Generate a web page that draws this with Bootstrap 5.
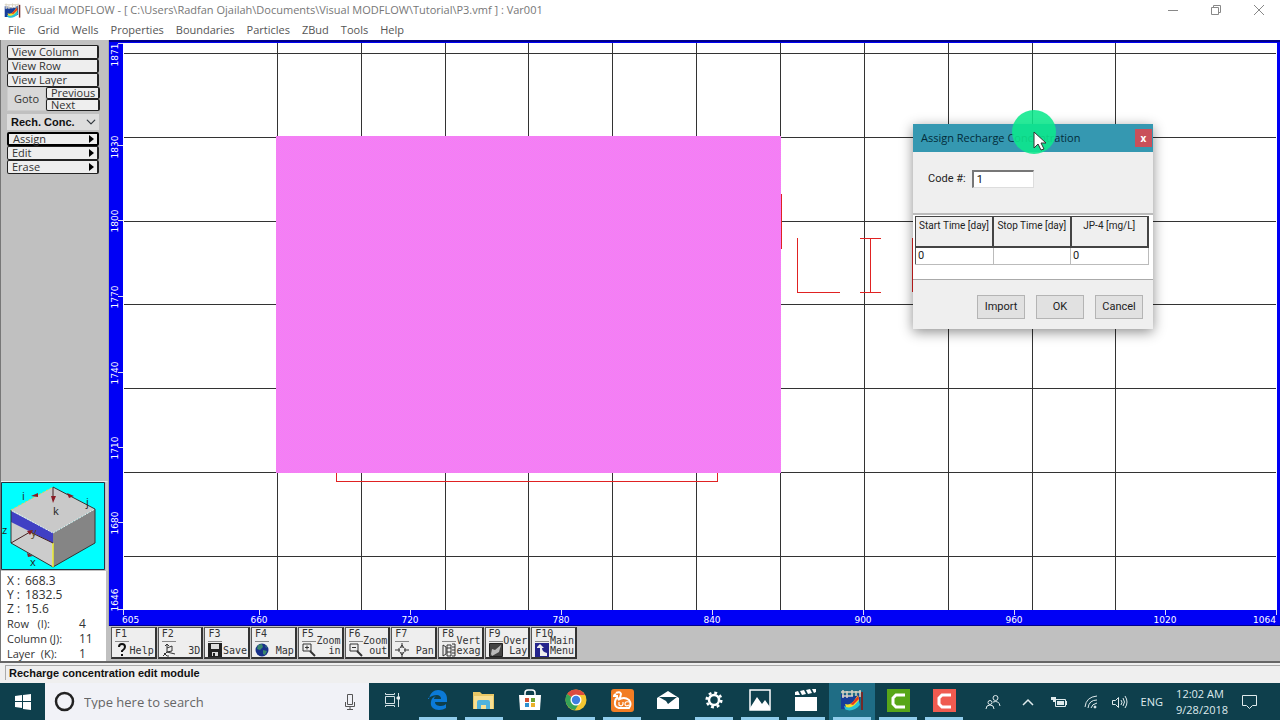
<!DOCTYPE html>
<html lang="en">
<head>
<meta charset="utf-8">
<meta name="viewport" content="width=device-width, initial-scale=1">
<title>Visual MODFLOW</title>
<link href="https://cdn.jsdelivr.net/npm/bootstrap@5.3.0/dist/css/bootstrap.min.css" rel="stylesheet">
<style>
body{font-family:"Open Sans","Noto Sans",sans-serif;font-size:11px;line-height:14px;color:#333;background:#fff}
button{font:inherit;color:inherit}
svg{display:block}
.titlebar{height:20px;line-height:20px;color:#777}
.win-ctl{width:43px;height:20px;border:0;background:none;padding:0;color:#888}
.menubar{height:20px}
.menubar .nav-link{color:#555;padding:0;line-height:20px}
.menubar .nav{gap:12px;padding-left:8px}
.side{width:108px;background:#c0c0c0;border-left:1px solid #777}
.side-tools{padding:5px 9px 0 6px}
.side-btn{display:flex;align-items:center;justify-content:space-between;width:100%;height:14px;line-height:12px;padding:0 3px 0 4px;border:1px solid #222;border-right-width:2px;border-radius:2px;background:#eee;text-align:left}
.side-btn.current{border-color:#000;border-width:2px;line-height:10px}
.jump .side-btn{height:12px;line-height:10px}
.goto{width:39px;background:#d8d8d8;border:1px solid #ccc;padding:0}
.side .form-select{font:bold 11px/16px "Liberation Sans",sans-serif;color:#111;padding:0 16px 0 4px;margin:3px 0 2px;height:16px;border:0;border-radius:0;background-color:#ddd;background-position:right 3px center;background-size:10px 10px}
.cube{border-top:1px solid #eee;border-right:2px solid #ccc}
.coords{background:#fff;padding:3px 0 0 6px;margin-right:2px;font-size:12px}
.coords dl{display:grid;grid-template-columns:18px 1fr;margin:0}
.coords dl.cells{grid-template-columns:72px 1fr}
.coords dt{font-weight:400;white-space:nowrap}
.coords dd{margin:0}
.coords .cells dt,.coords .cells dd{line-height:15px}
.coords .cells dt{font-size:11px}
.plot svg text{font-family:"DejaVu Sans",sans-serif;font-size:9px;fill:#fff}
.fkeys{height:35px;background:#c0c0c0;padding:1px 0 2px 3px}
.fkeys-row{display:grid;grid-template-columns:repeat(10,1fr);gap:1px;width:466px;height:32px}
.fkey{display:grid;grid-template-columns:auto 1fr;grid-template-rows:11px 17px;padding:1px 1px 0 3px;border:1px solid #555;border-right:2px solid #333;border-bottom:2px solid #333;background:#eee;font:10px/10px "DejaVu Sans Mono",monospace;text-align:right;color:#333}
.fkey .key{grid-row:1;grid-column:1/3;text-align:left}
.fkey svg{grid-row:2;grid-column:1;align-self:center;border-top:1px solid #888}
.fkey .cap{grid-row:2;grid-column:2;align-self:end;padding-bottom:1px}
.fkey.two .cap{grid-row:1/3;align-self:end}
.statusbar{height:22px;background:#efefef;border-top:2px solid #666;padding:2px 0 0 5px}
.status-text{border-top:1px solid #aaa;border-left:1px solid #aaa;padding-left:3px;font:bold 11px/14px "Liberation Sans",sans-serif;color:#111}
.dlg{position:absolute;top:84px;right:127px;width:240px;background:#efefef;box-shadow:0 3px 12px rgba(0,0,0,.45);font:11px/14px "Roboto",sans-serif;color:#222}
.dlg-head{height:28px;background:#3598b1;padding:0 1px 0 8px;font:11px/28px "Open Sans",sans-serif;color:#022c3a}
.dlg-x{width:17px;height:18px;border:0;background:#c9505a;color:#fff;padding:0;font-weight:700;font-size:10px;line-height:14px}
.code-row{padding:18px 0 25px 15px;gap:6px}
.code-row input{width:62px;height:18px;padding:0 3px;border:1px solid #ddd;border-top:2px solid #777;border-left:2px solid #777;background:#fff;font:inherit;color:#111}
.sheet{border-top:2px solid #bbb;border-bottom:1px solid #aaa;background:#fff;padding:1px 4px 14px 2px}
.sheet table{width:100%;table-layout:fixed;border-collapse:collapse;border-left:1px solid #555}
.sheet th{font-weight:400;font-size:10px;height:30px;vertical-align:top;text-align:center;background:#efefef;border:2px solid #444;border-top-width:1px;border-left-width:1px;padding:2px 0;white-space:nowrap}
.sheet td{height:18px;border-right:1px solid #bbb;border-bottom:1px solid #bbb;padding:1px 2px}
.dlg-foot{padding:15px 10px 10px;gap:11px}
.dlg-foot button{width:48px;height:24px;border:1px solid #b4b4b4;background:#e1e1e1;padding:0}
.pointer{position:absolute;left:99px;top:-14px}
.taskbar{height:37px;background:#0e3f4c;color:#e4eef0}
.start{width:45px;border:0;background:none;padding:0}
.search{flex:0 1 324px;background:#f1f2f7;padding:0 13px 0 9px;gap:9px}
.search input{min-width:0;border:0;background:none;outline:0;font-size:13px;color:#555;padding:0}
.search input::placeholder{color:#666;opacity:1}
.app{width:46px;border:0;border-bottom:3px solid transparent;background:none;padding:0;position:relative}
.app svg,.start svg,.win-ctl svg{margin:auto}
.app.open::after{content:"";position:absolute;left:4px;right:4px;bottom:-3px;height:3px;background:#91cdec}
.app.active{background:#1f6d85}
.tray{gap:13px;padding-right:22px;color:#dfeaec}
.clock{width:48px;line-height:16px;text-align:center;white-space:nowrap}
</style>
</head>
<body class="d-flex flex-column min-vh-100">

<svg width="0" height="0" class="position-absolute" aria-hidden="true">
  <symbol id="modflow" viewBox="0 0 24 22">
    <path d="M1 5v15h10l9-3V4l-5 3z" fill="#173d9a"/>
    <path d="M4 17c5 2 10-2 14-9l2 8c-4 5-11 7-15 4z" fill="#2bc2d4"/>
    <path d="M5 15c6 2 9-3 13-9l1 5c-3 4-7 9-13 7z" fill="#f4e22c"/><path d="M10 15c3-1 5-5 8-8l1 3-6 6z" fill="#e6361f"/>
    <path d="M1 3h20M2 7h11M3 1v8M7 2v7M12 1v6M16 2v5M20 1v7" stroke="#d9d3c4" stroke-width="1.500"/>
    <path d="M22 3v18" stroke="#732929" stroke-width="2"/>
  </symbol>
</svg>

<header>
  <div class="titlebar d-flex align-items-center">
    <svg width="17" height="17" class="ms-1 flex-shrink-0"><use href="#modflow"/></svg>
    <div class="flex-grow-1 text-nowrap ms-1">Visual MODFLOW - [ C:\Users\Radfan Ojailah\Documents\Visual MODFLOW\Tutorial\P3.vmf ] : Var001</div>
    <button class="win-ctl" aria-label="Minimize"><svg width="12" height="12" stroke="currentColor"><path d="M1 6.500h10"/></svg></button>
    <button class="win-ctl" aria-label="Restore"><svg width="12" height="12" fill="none" stroke="currentColor"><path d="M1.500 3.500h7v7h-7zM3.500 3.500v-2h7v7h-2"/></svg></button>
    <button class="win-ctl" aria-label="Close"><svg width="12" height="12" stroke="currentColor"><path d="M1 1l10 10M11 1L1 11"/></svg></button>
  </div>
  <nav class="menubar">
    <div class="nav flex-nowrap">
      <a class="nav-link" href="#">File</a><a class="nav-link" href="#">Grid</a><a class="nav-link" href="#">Wells</a><a class="nav-link" href="#">Properties</a><a class="nav-link" href="#">Boundaries</a><a class="nav-link" href="#">Particles</a><a class="nav-link" href="#">ZBud</a><a class="nav-link" href="#">Tools</a><a class="nav-link" href="#">Help</a>
    </div>
  </nav>
</header>

<main class="d-flex flex-grow-1">
  <aside class="side d-flex flex-column flex-shrink-0">
    <div class="side-tools">
      <button class="side-btn">View Column</button>
      <button class="side-btn">View Row</button>
      <button class="side-btn">View Layer</button>
      <div class="jump d-flex">
        <button class="goto flex-shrink-0">Goto</button>
        <div class="flex-grow-1"><button class="side-btn">Previous</button><button class="side-btn">Next</button></div>
      </div>
      <select class="form-select" aria-label="Module"><option>Rech. Conc.</option></select>
      <button class="side-btn current">Assign<svg width="5" height="8"><path d="M0 0l5 4-5 4z"/></svg></button>
      <button class="side-btn">Edit<svg width="5" height="8"><path d="M0 0l5 4-5 4z"/></svg></button>
      <button class="side-btn">Erase<svg width="5" height="8"><path d="M0 0l5 4-5 4z"/></svg></button>
    </div>
    <div class="cube mt-auto">
      <svg width="105" height="89" viewBox="0 0 105 89">
        <path d="M.5.500h103v87H.5z" fill="#0ff" stroke="#234"/>
        <path d="M10 28L52 5l42 22-42 24z" fill="#c9c9c9"/><path d="M94 27v34L52 85V51z" fill="#858585"/>
        <path d="M10 28l42 23v34L10 61z" fill="#ccc"/><path d="M10 29l42 22v10L10 40z" fill="#4040c4"/>
        <path d="M10 28l42 23 42-24" fill="none" stroke="#eee" stroke-dasharray="2 1"/>
        <path d="M52 5l42 22v34L52 85 10 61V28" fill="none" stroke="#333"/><path d="M10 28L52 5" stroke="#dddd44" stroke-dasharray="2 2"/><path d="M52 61v24" stroke="#ee3" stroke-width="1.500"/>
        <path d="M10 61l19-11 23 11M52 5v12" fill="none" stroke="#422"/>
        <path d="M50 14h5l-3 7zM30 14l7-3v4zM66 11l7 3-5 2zM26 49l6-1-3 5zM26 71l6 3-5 1z" fill="#8a1b24"/>
        <g font-size="11" fill="#222"><text x="21" y="18">i</text><text x="85" y="24">j</text><text x="52" y="33">k</text><text x="1" y="52">z</text><text x="30" y="54" fill="#542">y</text><text x="29" y="84">x</text></g>
      </svg>
    </div>
    <div class="coords">
      <dl><dt>X :</dt><dd>668.3</dd><dt>Y :</dt><dd>1832.5</dd><dt>Z :</dt><dd>15.6</dd></dl>
      <dl class="cells"><dt>Row &nbsp;&nbsp;(I):</dt><dd>4</dd><dt>Column (J):</dt><dd>11</dd><dt>Layer &nbsp;(K):</dt><dd>1</dd></dl>
    </div>
  </aside>

  <section class="d-flex flex-column flex-grow-1">
    <div class="plot position-relative">
      <svg class="w-100" viewBox="108 40 1172 586" role="img" aria-label="Model grid">
        <defs><pattern id="dither" width="2" height="2" patternUnits="userSpaceOnUse"><path d="M0 0h2v2H0z" fill="#ef8af0"/><path d="M0 0h1v1H0zM1 1h1v1H1z" fill="#f974f9"/></pattern></defs>
        <path d="M108 40h1172v586H108z" fill="#0000f5"/><path d="M108 40h1v586h-1z" fill="#aaa"/><path d="M109 40h1171v2H109zM109 625h1171v1H109z" fill="#00008c"/>
        <path d="M123 43h1154v567H123z" fill="#fff"/>
        <g fill="none" stroke="#333" shape-rendering="crispEdges">
          <path d="M277.500 43v567M361.500 43v567M445.500 43v567M528.500 43v567M612.500 43v567M696.500 43v567M780.500 43v567M864.500 43v567M948.500 43v567M1032.500 43v567M1115.500 43v567"/>
          <path d="M124 53.500h1152M124 137.500h1152M124 221.500h1152M124 304.500h1152M124 388.500h1152M124 472.500h1152M124 556.500h1152"/>
          <path stroke="#e02222" d="M336.500 472v9.500h381v-9.500M781.500 194v55M797.500 238v54.500h42M860 238.500h21M860 292.500h21M870.500 238v54M912.500 238v54"/>
          <path stroke="#dde" d="M123.500 610v5M259.500 610v5M410.500 610v5M561.500 610v5M712.500 610v5M863.500 610v5M1014.500 610v5M1165.500 610v5M1276.500 610v5M118 43.500h5M118 145.500h5M118 220.500h5M118 296.500h5M118 372.500h5M118 447.500h5M118 522.500h5M118 609.500h5"/>
        </g>
        <path d="M276 136h505v337H276z" fill="url(#dither)"/>
        <g><text x="122" y="623">605</text><g text-anchor="middle"><text x="259" y="623">660</text><text x="410" y="623">720</text><text x="561" y="623">780</text><text x="712" y="623">840</text><text x="863" y="623">900</text><text x="1014" y="623">960</text><text x="1165" y="623">1020</text></g><text x="1276" y="623" text-anchor="end">1064</text></g>
        <g text-anchor="middle"><text transform="translate(118 55) rotate(-90)">1871</text><text transform="translate(118 147) rotate(-90)">1830</text><text transform="translate(118 221) rotate(-90)">1800</text><text transform="translate(118 297) rotate(-90)">1770</text><text transform="translate(118 373) rotate(-90)">1740</text><text transform="translate(118 448) rotate(-90)">1710</text><text transform="translate(118 523) rotate(-90)">1680</text><text transform="translate(118 600) rotate(-90)">1646</text></g>
      </svg>

      <div class="dlg" role="dialog" aria-labelledby="dlg-title">
        <div class="dlg-head d-flex align-items-center justify-content-between"><span id="dlg-title">Assign Recharge Concentration</span><button class="dlg-x" aria-label="Close">x</button></div>
        <div class="code-row d-flex align-items-center"><label for="code">Code #:</label><input id="code" type="text" value="1"></div>
        <div class="sheet">
          <table><thead><tr><th>Start Time [day]</th><th>Stop Time [day]</th><th>JP-4 [mg/L]</th></tr></thead>
          <tbody><tr><td>0</td><td></td><td>0</td></tr></tbody></table>
        </div>
        <div class="dlg-foot d-flex justify-content-end"><button>Import</button><button>OK</button><button>Cancel</button></div>
        <svg class="pointer" width="44" height="44" aria-hidden="true"><circle cx="22" cy="22" r="22" fill="#0de88c" fill-opacity=".88"/><path d="M22 22v16l4-4 3 6 3-1-3-6h5z" fill="#fff" stroke="#333"/></svg>
      </div>
    </div>

    <div class="fkeys flex-grow-1">
      <div class="fkeys-row">
        <button class="fkey"><span class="key">F1</span><svg width="14" height="16"><path d="M4 5q0-3 3-3t3 3q0 2-3 4v1M7 12v2" fill="none" stroke="#111" stroke-width="2"/></svg><span class="cap">Help</span></button>
        <button class="fkey"><span class="key">F2</span><svg width="14" height="16" fill="none" stroke="#333"><path d="M1 14l4-4V3M5 10l8 2M5 6l5-2v5l-5 1M2 11l3 3h2M3 4l2-2 2 2"/></svg><span class="cap">3D</span></button>
        <button class="fkey"><span class="key">F3</span><svg width="14" height="16"><path d="M0 1h14v14H0z" fill="#222"/><path d="M3 2h8v5H3zM4 10h6v4H4z" fill="#ddd"/><path d="M5 11h2v3H5z" fill="#222"/></svg><span class="cap">Save</span></button>
        <button class="fkey"><span class="key">F4</span><svg width="14" height="16"><circle cx="7" cy="8" r="6.500" fill="#17308a"/><path d="M3 3l4-1 1 3-3 3-3-1zM8 8l4 1-2 4-2-1zM10 3l2 2-1 1z" fill="#39866b"/></svg><span class="cap">Map</span></button>
        <button class="fkey two"><span class="key">F5</span><svg width="14" height="16" fill="none" stroke="#333"><path d="M1 2h8v7H1zM3 5.500h4M5 3.500v4"/><path d="M8 9l5 5" stroke-width="2"/></svg><span class="cap">Zoom<br>in</span></button>
        <button class="fkey two"><span class="key">F6</span><svg width="14" height="16" fill="none" stroke="#333"><path d="M1 2h8v7H1zM3 5.500h4"/><path d="M8 9l5 5" stroke-width="2"/></svg><span class="cap">Zoom<br>out</span></button>
        <button class="fkey"><span class="key">F7</span><svg width="14" height="16" fill="none" stroke="#333"><path d="M7 1v5M7 10v5M0 8h5M9 8h5M5 6l2-3 2 3M5 10l2 3 2-3M4 6v4M10 6v4"/></svg><span class="cap">Pan</span></button>
        <button class="fkey two"><span class="key">F8</span><svg width="14" height="16" fill="none" stroke="#333"><path d="M1 3l3 2v7l-3 2zM5 3h4v11H5zM10 2h3v12h-3M5 6h4M5 10h4M10 5h3M10 8h3M10 11h3"/></svg><span class="cap">Vert<br>exag</span></button>
        <button class="fkey two"><span class="key">F9</span><svg width="14" height="16"><path d="M.5 1.500h13v13H.5z" fill="#444" stroke="#222"/><path d="M2 12l1-5 3 1 6-5-2 7-7 4z" fill="#bbb"/></svg><span class="cap">Over<br>Lay</span></button>
        <button class="fkey two"><span class="key">F10</span><svg width="14" height="16"><path d="M0 1h14v14H0z" fill="#24248c"/><path d="M2 5l3-3 4 4H7q0 4 5 5v3H5V6H2z" fill="#eee"/></svg><span class="cap">Main<br>Menu</span></button>
      </div>
    </div>
  </section>
</main>

<div class="statusbar"><div class="status-text">Recharge concentration edit module</div></div>

<footer class="taskbar d-flex">
  <button class="start flex-shrink-0" aria-label="Start"><svg width="16" height="16" fill="#fff"><path d="M0 2l7-1v6H0zM8 1l8-1v7H8zM0 8h7v6l-7-1zM8 8h8v8l-8-1z"/></svg></button>
  <div class="search d-flex align-items-center">
    <svg width="21" height="21" class="flex-shrink-0"><circle cx="10.500" cy="10.500" r="8.500" fill="none" stroke="#222" stroke-width="2.500"/></svg>
    <input class="flex-grow-1" type="text" placeholder="Type here to search" aria-label="Search">
    <svg width="12" height="18" fill="none" stroke="#555" class="flex-shrink-0"><path d="M3.500 1.500h5v10h-5zM1.500 9v4.500h9V9M6 14v3M3 16.500h6"/></svg>
  </div>
  <button class="app" aria-label="Task view"><svg width="16" height="16" fill="none" stroke="#d5e3e6"><path d="M1.500 4.500h9v7h-9zM1.500 1v1.500h9V1M1.500 15v-1.500h9V15M14.500 1v14"/><path d="M13 5h3v2h-3z" fill="#fff"/></svg></button>
  <button class="app open" aria-label="Edge"><svg width="20" height="20"><path d="M1 9C2 3 6 0 10 0c6 0 9 4 9 9v3H7c0 3 3 4 6 4 2 0 4-1 5-2v4c-2 1-4 2-7 2-6 0-9-4-8-8 0-3 2-5 5-6-2 1-2 3-2 3h7c0-3-2-4-4-4-4 0-7 2-10 4z" fill="#0b7ad8"/></svg></button>
  <button class="app open" aria-label="File Explorer"><svg width="22" height="20"><path d="M0 2h7l2 2h12v15H0z" fill="#e9c765"/><path d="M1 6h19v13H1z" fill="#f8df92"/><path d="M4 19v-7q0-2 2-2h9q2 0 2 2v7h-4v-4H8v4z" fill="#4fb2dd"/></svg></button>
  <button class="app" aria-label="Store"><svg width="22" height="22"><path d="M6 7V4q0-3 3-3h4q3 0 3 3v3" fill="none" stroke="#fff" stroke-width="1.500"/><path d="M0 6h22l-1 15H1z" fill="#fff"/><path d="M6 9h4v4H6z" fill="#d65034"/><path d="M12 9h4v4h-4z" fill="#6aa431"/><path d="M6 14h4v4H6z" fill="#2d91d0"/><path d="M12 14h4v4h-4z" fill="#eab129"/></svg></button>
  <button class="app open" aria-label="Chrome"><svg width="22" height="22"><circle cx="11" cy="11" r="10.500" fill="#f4c731"/><path d="M11 11L2 5A10.500 10.500 0 0 1 20 6h-9z" fill="#dd4b3e"/><path d="M2 5a10.500 10.500 0 0 0 8 16l5-8-4-2z" fill="#36a257"/><circle cx="11" cy="11" r="5.500" fill="#fff"/><circle cx="11" cy="11" r="4.200" fill="#3f7fe0"/></svg></button>
  <button class="app open" aria-label="UC Browser"><svg width="23" height="23"><rect width="23" height="23" rx="3" fill="#f27d24"/><path d="M5 4q4-2 5 1 0 3-3 6 6-4 11 0 3 4 0 8H8q-5-1-4-6 0-3 3-5M5 5q-2 1-2 2h4" fill="none" stroke="#fff" stroke-width="2"/><path d="M8 13v3q3 2 4-1v-2M18 13q-4-1-4 2t4 1" fill="none" stroke="#fff" stroke-width="1.200"/></svg></button>
  <button class="app" aria-label="Mail"><svg width="24" height="20"><path d="M1 8l11-7 11 7v11H1z" fill="#fff"/><path d="M3 7h18l-9 7-2-3z" fill="#0e3f4c"/></svg></button>
  <button class="app open" aria-label="Settings"><svg width="18" height="18" viewBox="0 0 18 18" fill="none" stroke="#fff"><circle cx="9" cy="9" r="5" stroke-width="2.500"/><circle cx="9" cy="9" r="7.300" stroke-width="2.500" stroke-dasharray="2.870 2.870"/></svg></button>
  <button class="app open" aria-label="Photos"><svg width="22" height="22"><path d="M1 1h20v20H1z" fill="none" stroke="#fff" stroke-width="1.500"/><path d="M1 19l7-11 5 7 3-4 5 7v3H1z" fill="#fff"/></svg></button>
  <button class="app open" aria-label="Movies"><svg width="22" height="22" fill="#fff"><path d="M0 8h22v14H0z"/><path d="M0 3l3-1 2 4H0zM5 2l4-1 2 4-4 1zM11 1l4-1 2 4-4 1zM17 0h4v3l-2 1z"/></svg></button>
  <button class="app open active" aria-label="Visual MODFLOW"><svg width="24" height="22"><use href="#modflow"/></svg></button>
  <button class="app open" aria-label="Camtasia"><svg width="23" height="23"><path d="M0 0h23v23H0z" fill="#58a618"/><path d="M18 6H9L6 9v6l3 3h9" fill="none" stroke="#fff" stroke-width="3"/></svg></button>
  <button class="app open" aria-label="Recorder"><svg width="23" height="23"><path d="M0 0h23v23H0z" fill="#ef5b50"/><path d="M18 6H9L6 9v6l3 3h9" fill="none" stroke="#fff" stroke-width="3"/></svg></button>
  <div class="tray d-flex align-items-center ms-auto">
    <svg width="16" height="16" fill="none" stroke="currentColor" class="me-2"><circle cx="10.500" cy="4" r="2.500"/><circle cx="5" cy="8.500" r="2"/><path d="M1 15q0-4 4-4t4 4M8 8q6-2 7 4"/></svg>
    <svg width="12" height="8" fill="none" stroke="currentColor" class="me-1" stroke-width="1.500"><path d="M1 7l5-5 5 5"/></svg>
    <svg width="16" height="12"><path d="M4.500 3.500h10v7h-10z" fill="none" stroke="#dfeaec"/><path d="M6 5h7v4H6zM15 5h1v4h-1zM0 1h5v3H4v2H2V4H0z" fill="#dfeaec"/></svg>
    <svg width="14" height="14" fill="none" stroke="currentColor" class="ms-1"><path d="M1 12Q2 2 13 1M4 13q1-8 9-8M7 13q1-4 6-5"/><circle cx="11" cy="12" r="1" fill="currentColor"/></svg>
    <svg width="17" height="14" fill="none" stroke="currentColor"><path d="M1.500 5.500h3l3-3v10l-3-3h-3zM10 5q2 2 0 5M12 3q3 4 0 8M14 1q4 6 0 12"/></svg>
    <span>ENG</span>
    <div class="clock">12:02 AM<br>9/28/2018</div>
    <svg width="17" height="17" fill="none" stroke="currentColor" class="ms-1"><path d="M1.500 2.500h14v10h-4l-3 3-3-3h-4z"/></svg>
  </div>
</footer>
<script src="https://cdn.jsdelivr.net/npm/bootstrap@5.3.0/dist/js/bootstrap.bundle.min.js"></script>
</body>
</html>
